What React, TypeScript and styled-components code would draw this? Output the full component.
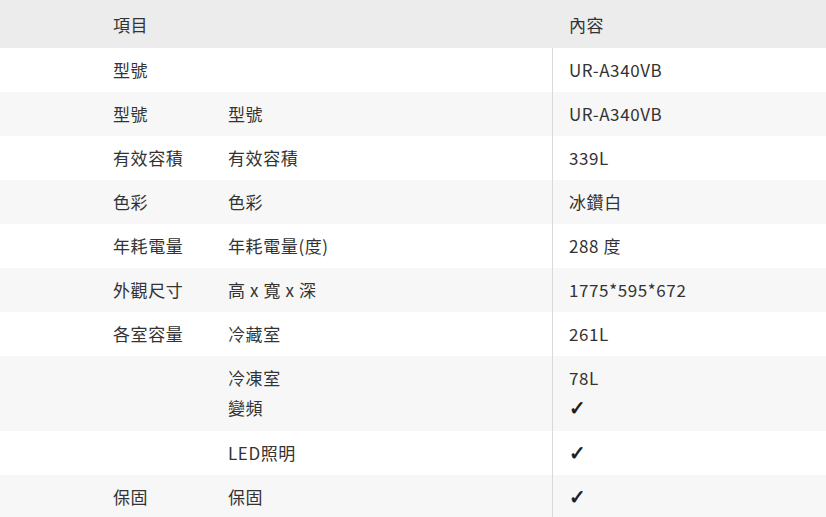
import React from "react";
import styled, { createGlobalStyle } from "styled-components";

const Global = createGlobalStyle`
  html, body { margin: 0; padding: 0; background: #ffffff; }
  body {
    font-family: "Noto Sans CJK TC", "Noto Sans", sans-serif;
    color: #333333;
  }
`;

const Table = styled.div`
  width: 826px;
  display: flex;
  flex-direction: column;
  font-size: 17px;
  letter-spacing: 0.6px;
`;

const HeaderRow = styled.div`
  display: grid;
  grid-template-columns: 96px 456px 1fr;
  height: 48px;
  background: #ececec;
`;

const HeaderSpacer = styled.div`
  border-bottom: 1px solid #dcdcdc;
  box-sizing: border-box;
  height: 49px;
`;

const HeaderCell = styled.div`
  display: flex;
  align-items: center;
  padding-left: 17px;
`;

const Row = styled.div<{ $alt?: boolean; $extra?: number }>`
  display: grid;
  grid-template-columns: 96px 115px 341px 1fr;
  background: ${(p) => (p.$alt ? "#f7f7f7" : "#ffffff")};
  padding-top: 7px;
  padding-bottom: ${(p) => 7 + (p.$extra ?? 0)}px;
`;

const Cell = styled.div`
  display: flex;
  flex-direction: column;
  padding-left: 17px;
  white-space: nowrap;
`;

const Line = styled.div`
  height: 30px;
  line-height: 30px;
  overflow: visible;
`;

const DividerCell = styled(Cell)`
  position: relative;
  &::before {
    content: "";
    position: absolute;
    left: 0;
    top: -7px;
    bottom: -8px;
    width: 1px;
    background: #d9d9d9;
  }
`;

const Check = styled.span`
  font-family: "DejaVu Sans", sans-serif;
  font-size: 20px;
  font-weight: bold;
  color: #1a1a1a;
  line-height: 30px;
  -webkit-text-stroke: 0.7px #1a1a1a;
`;

type R = { a?: string; b: string[]; c: React.ReactNode[] };

const ck = <Check>✓</Check>;

const rows: R[] = [
  { a: "型號", b: [""], c: ["UR-A340VB"] },
  { a: "型號", b: ["型號"], c: ["UR-A340VB"] },
  { a: "有效容積", b: ["有效容積"], c: ["339L"] },
  { a: "色彩", b: ["色彩"], c: ["冰鑽白"] },
  { a: "年耗電量", b: ["年耗電量(度)"], c: ["288 度"] },
  { a: "外觀尺寸", b: ["高 x 寬 x 深"], c: ["1775*595*672"] },
  { a: "各室容量", b: ["冷藏室"], c: ["261L"] },
  { a: "", b: ["冷凍室", "變頻"], c: ["78L", ck] },
  { a: "", b: ["LED照明"], c: [ck] },
  { a: "保固", b: ["保固"], c: [ck] },
];

export default function App() {
  return (
    <>
      <Global />
      <Table>
        <HeaderRow>
          <HeaderSpacer />
          <HeaderCell>項目</HeaderCell>
          <HeaderCell>內容</HeaderCell>
        </HeaderRow>
        {rows.map((r, i) => (
          <Row key={i} $alt={i % 2 === 1} $extra={r.b.length > 1 ? 1 : 0}>
            <div />
            <Cell>
              <Line>{r.a || "\u00a0"}</Line>
            </Cell>
            <Cell>
              {r.b.map((t, j) => (
                <Line key={j}>{t || "\u00a0"}</Line>
              ))}
            </Cell>
            <DividerCell>
              {r.c.map((t, j) => (
                <Line key={j}>{t}</Line>
              ))}
            </DividerCell>
          </Row>
        ))}
      </Table>
    </>
  );
}
